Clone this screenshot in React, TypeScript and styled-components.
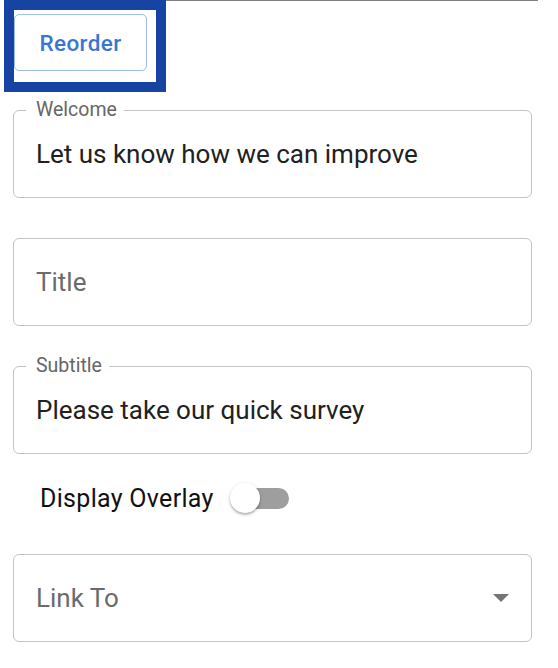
import styled, { createGlobalStyle } from "styled-components";

const GlobalStyle = createGlobalStyle`
  body {
    margin: 0;
    background: #ffffff;
    font-family: Roboto, "Noto Sans", Arial, sans-serif;
  }
`;

const Page = styled.div`
  position: relative;
  width: 558px;
  min-height: 668px;
  background: #ffffff;
`;

const TopRule = styled.div`
  height: 1px;
  margin: 0 20px 0 4px;
  background: #7f7f7f;
`;

const FocusRing = styled.div`
  position: absolute;
  left: 4px;
  top: 0;
  width: 162px;
  height: 92px;
  box-sizing: border-box;
  border: 10px solid #1743a3;
  pointer-events: none;
`;

const Content = styled.div`
  display: flex;
  flex-direction: column;
  align-items: flex-start;
  padding: 13px 26px 0 13px;
`;

const ReorderButton = styled.button`
  margin-left: 1px;
  width: 133px;
  height: 57px;
  box-sizing: border-box;
  border: 1px solid #9dbde9;
  border-radius: 5px;
  background: #ffffff;
  color: #3876d2;
  font-family: Roboto, Arial, sans-serif;
  font-size: 22.5px;
  font-weight: 500;
  letter-spacing: 0.4px;
  cursor: pointer;
`;

const Field = styled.div<{ $gap: number }>`
  position: relative;
  margin-top: ${(p) => p.$gap}px;
  width: 519px;
  height: 88px;
  box-sizing: border-box;
  border: 1px solid #c4c4c4;
  border-radius: 6px;
  display: flex;
  align-items: center;
  padding: 0 22px;
`;

const FloatLabel = styled.span`
  position: absolute;
  top: -11px;
  left: 12px;
  padding: 0 7px 0 10px;
  background: #ffffff;
  color: #666666;
  font-size: 19.5px;
  line-height: 20px;
`;

const FieldText = styled.span<{ $placeholder?: boolean }>`
  flex: 1;
  color: ${(p) => (p.$placeholder ? "#6b6b6b" : "#212121")};
  font-size: 26px;
  white-space: nowrap;
`;

const Row = styled.div`
  margin-top: 28px;
  height: 32px;
  display: flex;
  align-items: center;
  gap: 15px;
  padding-left: 27px;
`;

const RowLabel = styled.span`
  color: #111111;
  font-size: 25px;
  letter-spacing: 0.3px;
`;

const SwitchBox = styled.span`
  position: relative;
  width: 60px;
  height: 32px;
  display: inline-block;
`;

const Track = styled.span`
  position: absolute;
  left: 9px;
  top: 5.5px;
  width: 51px;
  height: 21px;
  border-radius: 11px;
  background: #9e9e9e;
`;

const Thumb = styled.span`
  position: absolute;
  left: 1px;
  top: 0.5px;
  width: 30px;
  height: 30px;
  border-radius: 50%;
  background: #ffffff;
  box-shadow: 0 2px 2px rgba(0, 0, 0, 0.22), 0 1px 4px rgba(0, 0, 0, 0.14);
`;

const ArrowIcon = () => (
  <svg width="16" height="8" viewBox="0 0 16 8">
    <polygon points="0,0 16,0 8,8" fill="#757575" />
  </svg>
);

export default function App() {
  return (
    <>
      <GlobalStyle />
      <Page>
        <TopRule />
        <Content>
          <ReorderButton>Reorder</ReorderButton>
          <Field $gap={39}>
            <FloatLabel>Welcome</FloatLabel>
            <FieldText>Let us know how we can improve</FieldText>
          </Field>
          <Field $gap={40}>
            <FieldText $placeholder>Title</FieldText>
          </Field>
          <Field $gap={40}>
            <FloatLabel>Subtitle</FloatLabel>
            <FieldText>Please take our quick survey</FieldText>
          </Field>
          <Row>
            <RowLabel>Display Overlay</RowLabel>
            <SwitchBox>
              <Track />
              <Thumb />
            </SwitchBox>
          </Row>
          <Field $gap={40}>
            <FieldText $placeholder>Link To</FieldText>
            <ArrowIcon />
          </Field>
        </Content>
        <FocusRing />
      </Page>
    </>
  );
}
